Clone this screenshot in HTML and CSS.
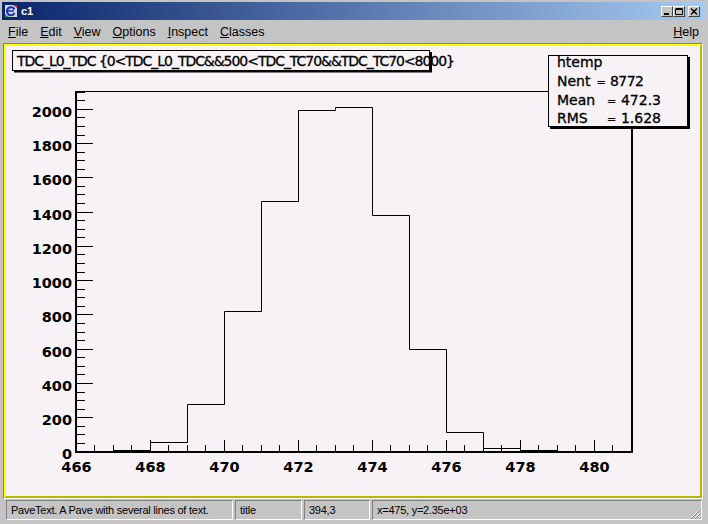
FILE: index.html
```html
<!DOCTYPE html>
<html lang="en">
<head>
    <meta charset="UTF-8">
    <title>c1</title>
    <link rel="stylesheet" href="styles.css">
</head>
<body>
    <div class="titlebar">
        <svg class="app-icon" width="12" height="12" viewBox="0 0 12 12">
            <rect x="0" y="0" width="12" height="12" fill="#d8d8d8"/>
            <path d="M9.5 4.5 A4 4 0 1 0 9.5 8" fill="none" stroke="#1030c0" stroke-width="2"/>
            <path d="M3 6 H9" stroke="#1030c0" stroke-width="1.5"/>
            <path d="M0 9 L4 12 L0 12 Z" fill="#20a020"/>
            <path d="M8 0 L12 0 L12 3 Z" fill="#d02020"/>
        </svg>
        <span class="title">c1</span>
        <div class="win-buttons">
            <span class="win-btn">
                <svg width="8" height="7" viewBox="0 0 8 7"><rect x="1" y="5" width="5" height="2" fill="#000"/></svg>
            </span>
            <span class="win-btn">
                <svg width="8" height="7" viewBox="0 0 8 7"><path d="M0.5 1.5 H7.5 V6.5 H0.5 Z M0.5 0.5 H7.5" fill="none" stroke="#000"/></svg>
            </span>
            <span class="win-btn close">
                <svg width="8" height="7" viewBox="0 0 8 7"><path d="M1 0.5 L7 6.5 M7 0.5 L1 6.5" stroke="#000" stroke-width="1.4"/></svg>
            </span>
        </div>
    </div>

    <ul class="menubar">
        <li><u>F</u>ile</li>
        <li><u>E</u>dit</li>
        <li><u>V</u>iew</li>
        <li><u>O</u>ptions</li>
        <li><u>I</u>nspect</li>
        <li><u>C</u>lasses</li>
        <li class="help"><u>H</u>elp</li>
    </ul>

    <div class="canvas-frame">
        <div class="canvas">
            <svg class="plot" width="694" height="450" viewBox="6 46 694 450">
                <!-- frame -->
                <path d="M76 91.5 H632 M632 91 V452" fill="none" stroke="#000" stroke-width="1"/>
                <path d="M632 91 V453" stroke="#000" stroke-width="2"/>
                <path d="M76 91 V453 M75 452 H633" fill="none" stroke="#000" stroke-width="2"/>

                <!-- y ticks -->
                <path class="ticks" d="M77 417.5 H93 M77 383.5 H93 M77 349.5 H93 M77 314.5 H93 M77 280.5 H93 M77 246.5 H93 M77 212.5 H93 M77 177.5 H93 M77 143.5 H93 M77 109.5 H93"/>
                <path class="ticks" d="M77 443.5 H85 M77 434.5 H85 M77 426.5 H85 M77 409.5 H85 M77 400.5 H85 M77 392.5 H85 M77 374.5 H85 M77 366.5 H85 M77 357.5 H85 M77 340.5 H85 M77 332.5 H85 M77 323.5 H85 M77 306.5 H85 M77 297.5 H85 M77 289.5 H85 M77 272.5 H85 M77 263.5 H85 M77 254.5 H85 M77 237.5 H85 M77 229.5 H85 M77 220.5 H85 M77 203.5 H85 M77 194.5 H85 M77 186.5 H85 M77 169.5 H85 M77 160.5 H85 M77 152.5 H85 M77 135.5 H85 M77 126.5 H85 M77 117.5 H85 M77 100.5 H85 M77 92.5 H85"/>

                <!-- x ticks -->
                <path class="ticks" d="M150.5 451 V440 M224.5 451 V440 M298.5 451 V440 M372.5 451 V440 M446.5 451 V440 M520.5 451 V440 M594.5 451 V440"/>
                <path class="ticks" d="M94.5 451 V445 M113.5 451 V445 M131.5 451 V445 M168.5 451 V445 M187.5 451 V445 M205.5 451 V445 M242.5 451 V445 M261.5 451 V445 M279.5 451 V445 M316.5 451 V445 M335.5 451 V445 M353.5 451 V445 M390.5 451 V445 M409.5 451 V445 M427.5 451 V445 M464.5 451 V445 M483.5 451 V445 M501.5 451 V445 M538.5 451 V445 M557.5 451 V445 M575.5 451 V445 M612.5 451 V445"/>

                <!-- histogram -->
                <path class="hist" d="M76 451.5 H113.5 V450.5 H150.5 V442.5 H187.5 V404.5 H224.5 V311.5 H261.5 V201.5 H298.5 V110.5 H335.5 V107.5 H372.5 V215.5 H409.5 V349.5 H446.5 V432.5 H483.5 V448.5 H520.5 V450.5 H557.5 V451.5 H631.5"/>

                <!-- y labels -->
                <g class="axis-label" text-anchor="end">
                    <text x="72" y="459.4">0</text>
                    <text x="72" y="425.1">200</text>
                    <text x="72" y="390.9">400</text>
                    <text x="72" y="356.6">600</text>
                    <text x="72" y="322.3">800</text>
                    <text x="72" y="288.1">1000</text>
                    <text x="72" y="253.8">1200</text>
                    <text x="72" y="219.5">1400</text>
                    <text x="72" y="185.2">1600</text>
                    <text x="72" y="151">1800</text>
                    <text x="72" y="116.7">2000</text>
                </g>

                <!-- x labels -->
                <g class="axis-label" text-anchor="middle">
                    <text x="76.5" y="471.5">466</text>
                    <text x="150.5" y="471.5">468</text>
                    <text x="224.5" y="471.5">470</text>
                    <text x="298.5" y="471.5">472</text>
                    <text x="372.5" y="471.5">474</text>
                    <text x="446.5" y="471.5">476</text>
                    <text x="520.5" y="471.5">478</text>
                    <text x="594.5" y="471.5">480</text>
                </g>

                <!-- title pave -->
                <rect x="14" y="52" width="418" height="20.5" fill="#000"/>
                <rect x="12.5" y="50.5" width="417" height="20" fill="#f6f2f6" stroke="#000"/>
                <text class="pave-text" x="17" y="65.5" textLength="438" lengthAdjust="spacing">TDC_L0_TDC {0&lt;TDC_L0_TDC&amp;&amp;500&lt;TDC_TC70&amp;&amp;TDC_TC70&lt;8000}</text>

                <!-- stats pave -->
                <rect x="550" y="57" width="140" height="72" fill="#000"/>
                <rect x="548.5" y="55.5" width="139" height="71" fill="#f6f2f6" stroke="#000"/>
                <g class="pave-text">
                    <text x="557" y="67">htemp</text>
                    <text x="557" y="86">Nent</text>
                    <text class="eq" x="601" y="86" text-anchor="middle">=</text>
                    <text x="610" y="86" textLength="34" lengthAdjust="spacing">8772</text>
                    <text x="557" y="104.7">Mean</text>
                    <text class="eq" x="611.5" y="104.7" text-anchor="middle">=</text>
                    <text x="661" y="104.7" text-anchor="end">472.3</text>
                    <text x="557" y="123.3">RMS</text>
                    <text class="eq" x="611.5" y="123.3" text-anchor="middle">=</text>
                    <text x="661" y="123.3" text-anchor="end">1.628</text>
                </g>
            </svg>
        </div>
    </div>

    <div class="statusbar">
        <div class="field f1">PaveText. A Pave with several lines of text.</div>
        <div class="field f2">title</div>
        <div class="field f3">394,3</div>
        <div class="field f4">
            <span>x=475, y=2.35e+03</span>
            <svg class="grip" width="12" height="12" viewBox="0 0 12 12">
                <path d="M11 2 L2 11 M11 6 L6 11 M11 10 L10 11" stroke="#fff" stroke-width="1"/>
                <path d="M12 2 L2 12 M12 6 L6 12 M12 10 L10 12" stroke="#808080" stroke-width="1"/>
            </svg>
        </div>
    </div>
</body>
</html>
```

FILE: styles.css
```css
* {
    margin: 0;
    padding: 0;
    box-sizing: border-box;
}

body {
    width: 708px;
    height: 524px;
    overflow: hidden;
    background-color: #c4c4c4;
    font-family: "Liberation Sans", Arial, sans-serif;
    color: #000;
}

/* window title */
.titlebar {
    display: flex;
    align-items: center;
    height: 18px;
    margin: 2px 2px 0 2px;
    padding-left: 3px;
    background: linear-gradient(to right, #0a246a, #a6caf0);
}

.app-icon {
    display: block;
}

.title {
    margin-left: 4px;
    color: #fff;
    font-weight: bold;
    font-size: 11px;
}

.win-buttons {
    display: flex;
    margin-left: auto;
    margin-right: 6px;
}

.win-btn {
    display: flex;
    align-items: center;
    justify-content: center;
    width: 12px;
    height: 11px;
    background-color: #c4c4c4;
    border: 1px solid;
    border-color: #fff #404040 #404040 #fff;
}

.win-btn.close {
    margin-left: 3px;
}

/* menu */
.menubar {
    display: flex;
    list-style: none;
    height: 22px;
    padding: 2px 3px 0 2px;
    font-size: 12.5px;
    line-height: 20px;
}

.menubar li {
    padding: 0 6px;
}

.menubar .help {
    margin-left: auto;
}

/* canvas */
.canvas-frame {
    height: 456px;
    margin: 1px 5px 0 3px;
    border: 1px solid;
    border-color: #808080 #fff #fff #808080;
}

.canvas {
    height: 100%;
    border: 2px solid;
    border-color: #ffff00 #bcb800 #bcb800 #ffff00;
    background-color: #f6f2f6;
}

.plot {
    display: block;
}

.ticks {
    fill: none;
    stroke: #000;
    stroke-width: 1;
}

.hist {
    fill: none;
    stroke: #000;
    stroke-width: 1;
}

.axis-label {
    font-family: "DejaVu Sans", sans-serif;
    font-weight: bold;
    font-size: 14.5px;
    fill: #000;
}

.pave-text {
    font-family: "DejaVu Sans", sans-serif;
    font-size: 14px;
    fill: #000;
    stroke: #000;
    stroke-width: 0.3;
}

.pave-text .eq {
    font-size: 11px;
}

/* status bar */
.statusbar {
    display: flex;
    gap: 2px;
    height: 20px;
    margin: 1px 0 0 6px;
    font-size: 11px;
    letter-spacing: -0.25px;
}

.field {
    border: 1px solid;
    border-color: #808080 #fff #fff #808080;
    padding-left: 4px;
    line-height: 18px;
    white-space: nowrap;
    overflow: hidden;
}

.f1 { width: 227px; }
.f2 { width: 67px; }
.f3 { width: 66px; }

.f4 {
    display: flex;
    width: 330px;
}

.grip {
    margin-left: auto;
    margin-top: 6px;
}
```
